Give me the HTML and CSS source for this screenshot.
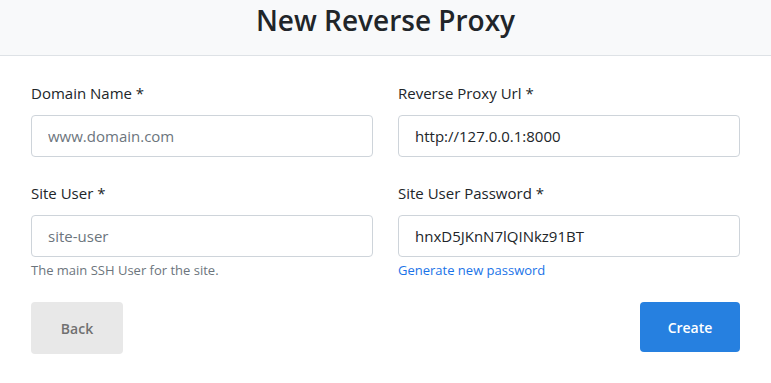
FILE: index.html
```html
<!DOCTYPE html>
<html>

<head>
    <title>New Reverse Proxy</title>
    <link rel="stylesheet" href="styles.css">
</head>

<body>
    <div class="header">
        <h1>New Reverse Proxy</h1>
    </div>

    <div class="container">
        <div class="form-grid">
            <div class="form-group">
                <label>Domain Name *</label>
                <input type="text" id="domain" placeholder="www.domain.com">
            </div>
            <div class="form-group">
                <label>Reverse Proxy Url *</label>
                <input type="text" id="proxyUrl" value="http://127.0.0.1:8000">
            </div>
            <div class="form-group">
                <label>Site User *</label>
                <input type="text" id="siteUser" placeholder="site-user">
                <small class="help">The main SSH User for the site.</small>
            </div>
            <div class="form-group">
                <label>Site User Password *</label>
                <input type="text" id="sitePassword" value="hnxD5JKnN7lQINkz91BT">
                <a href="#" class="help link">Generate new password</a>
            </div>
        </div>

        <div class="actions">
            <button class="btn btn-back">Back</button>
            <button class="btn btn-create">Create</button>
        </div>
    </div>
</body>

</html>
```

FILE: styles.css
```css
body {
    font-family: "Open Sans", "Noto Sans", sans-serif;
    margin: 0;
    color: #212529;
    background: #fff;
}

.header {
    background: #f8f9fa;
    border-bottom: 1px solid #dee2e6;
    height: 56px;
    box-sizing: border-box;
    text-align: center;
}

.header h1 {
    margin: 0;
    font-size: 28px;
    font-weight: 600;
    line-height: 40px;
}

.container {
    padding: 26px 31px;
}

.form-grid {
    display: grid;
    grid-template-columns: 1fr 1fr;
    column-gap: 25px;
    row-gap: 25px;
}

.form-group {
    display: flex;
    flex-direction: column;
}

label {
    font-size: 15px;
    line-height: 22px;
    margin-bottom: 11px;
}

input {
    width: 100%;
    height: 42px;
    padding: 0 16px;
    box-sizing: border-box;
    border: 1px solid #ced4da;
    border-radius: 4px;
    font-family: inherit;
    font-size: 15px;
    color: #212529;
}

input::placeholder {
    color: #6c757d;
}

.help {
    font-size: 13px;
    line-height: 18px;
    margin-top: 4px;
    color: #6c757d;
}

.link {
    color: #1a73e8;
    text-decoration: none;
}

.actions {
    display: flex;
    justify-content: space-between;
    align-items: flex-start;
    margin-top: 23px;
}

.btn {
    border: none;
    border-radius: 4px;
    font-family: inherit;
    font-size: 14px;
    font-weight: 600;
    cursor: pointer;
}

.btn-back {
    background: #e8e8e8;
    color: #707070;
    width: 92px;
    height: 52px;
}

.btn-create {
    background: #2680e0;
    color: #fff;
    width: 100px;
    height: 50px;
}
```
